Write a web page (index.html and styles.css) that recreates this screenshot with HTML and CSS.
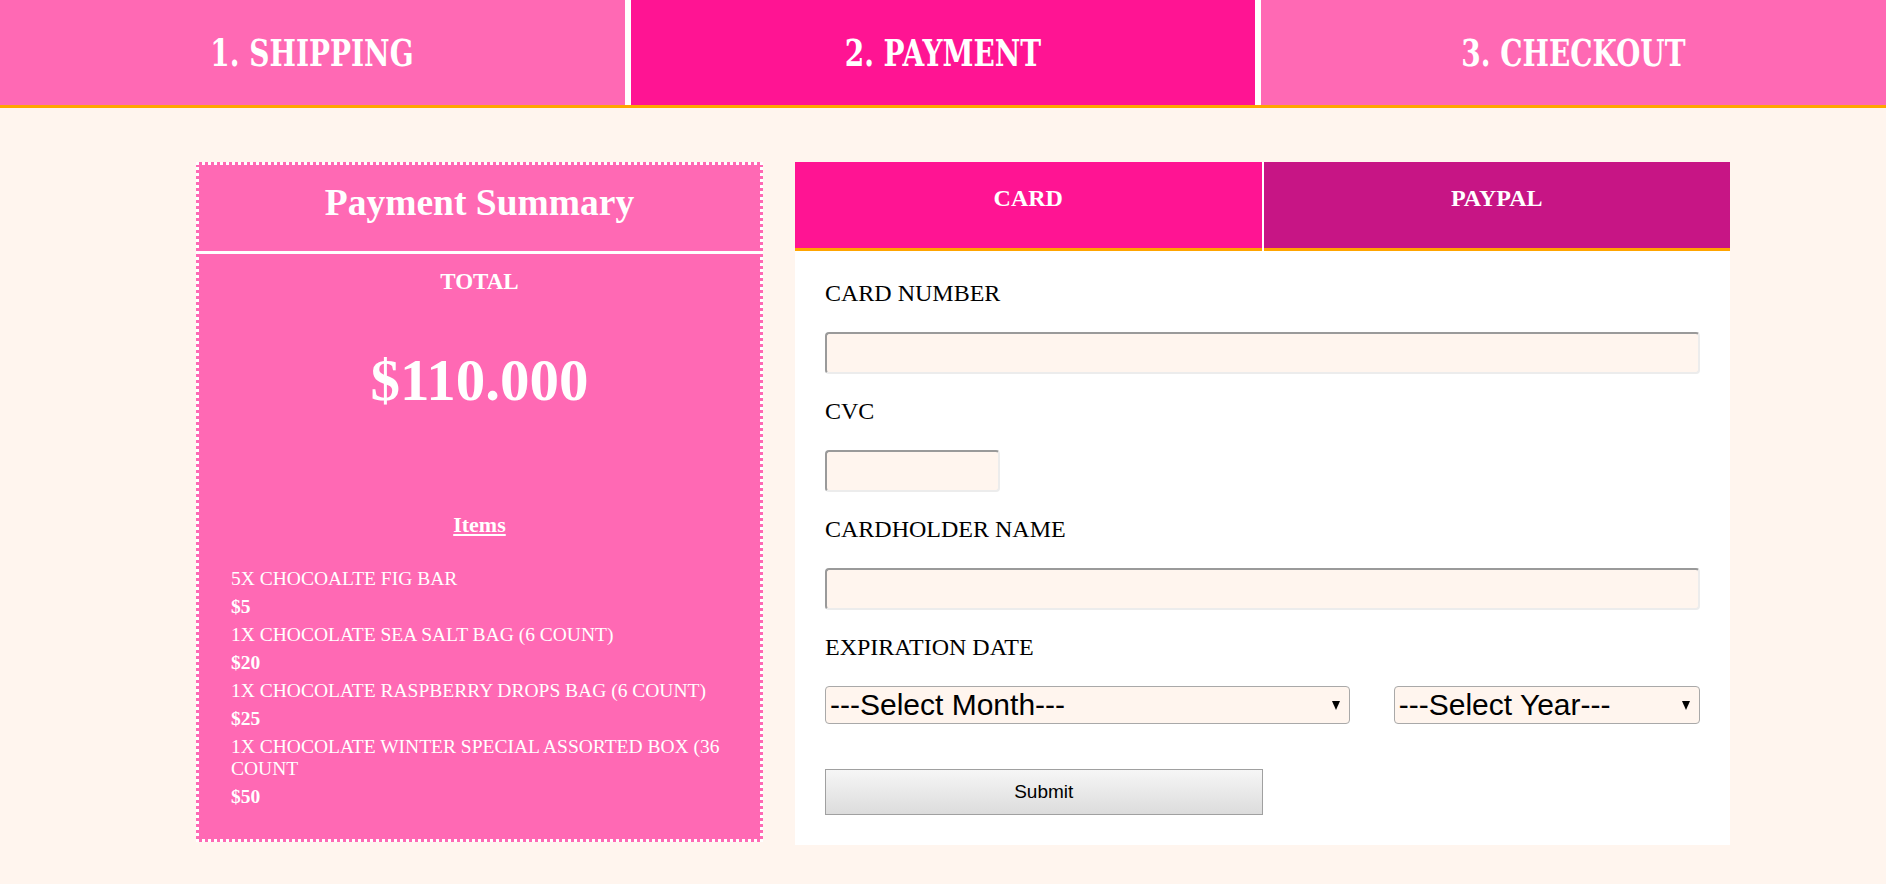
FILE: index.html
```html
<!DOCTYPE html>
<html lang="en">
<head>
<meta charset="utf-8">
<title>Payment</title>
<link rel="stylesheet" href="styles.css">
</head>
<body>
<nav class="steps">
  <div class="step"><span class="step-label">1. SHIPPING</span></div>
  <div class="step step-active"><span class="step-label">2. PAYMENT</span></div>
  <div class="step"><span class="step-label">3. CHECKOUT</span></div>
</nav>
<main class="layout">
  <section class="summary">
    <h1 class="summary-title">Payment Summary</h1>
    <div class="summary-body">
      <h3 class="total-label">TOTAL</h3>
      <div class="total-amount">$110.000</div>
      <h4 class="items-title">Items</h4>
      <div class="items">
        <p class="item-name">5X CHOCOALTE FIG BAR</p>
        <p class="item-price">$5</p>
        <p class="item-name">1X CHOCOLATE SEA SALT BAG (6 COUNT)</p>
        <p class="item-price">$20</p>
        <p class="item-name">1X CHOCOLATE RASPBERRY DROPS BAG (6 COUNT)</p>
        <p class="item-price">$25</p>
        <p class="item-name">1X CHOCOLATE WINTER SPECIAL ASSORTED BOX (36 COUNT</p>
        <p class="item-price">$50</p>
      </div>
    </div>
  </section>
  <section class="pay">
    <div class="pay-tabs">
      <div class="pay-tab pay-tab-card">CARD</div>
      <div class="pay-tab pay-tab-paypal">PAYPAL</div>
    </div>
    <form class="pay-form">
      <label class="field-label">CARD NUMBER</label>
      <input class="field field-wide" type="text">
      <label class="field-label">CVC</label>
      <input class="field field-short" type="text">
      <label class="field-label">CARDHOLDER NAME</label>
      <input class="field field-wide" type="text">
      <label class="field-label">EXPIRATION DATE</label>
      <div class="date-row">
        <span class="select-wrap select-month">
          <select class="select"><option>---Select Month---</option></select>
        </span>
        <span class="select-wrap select-year">
          <select class="select"><option>---Select Year---</option></select>
        </span>
      </div>
      <button class="submit" type="button">Submit</button>
    </form>
  </section>
</main>
</body>
</html>
```
FILE: styles.css
```css
html, body {
  margin: 0;
  padding: 0;
}

body {
  background: #fff5ee;
  font-family: "Liberation Serif", "Times New Roman", serif;
  min-height: 884px;
}

.steps {
  display: flex;
  gap: 6px;
  height: 105px;
  background: #ffffff;
  border-bottom: 3px solid #ffa500;
}

.step {
  flex: 1;
  display: flex;
  align-items: center;
  justify-content: center;
  background: #ff69b4;
}

.step-active {
  background: #ff1493;
}

.step-label {
  display: inline-block;
  color: #ffffff;
  font-family: "DejaVu Serif Condensed", "DejaVu Serif", serif;
  font-weight: bold;
  font-size: 37px;
  line-height: 40px;
  transform: scaleX(0.84);
  white-space: nowrap;
}

.layout {
  display: flex;
  align-items: flex-start;
  gap: 32px;
  padding: 54px 156px 0 196px;
}

.summary {
  width: 567px;
  flex: none;
  box-sizing: border-box;
  background: #ff69b4;
  border: 3px dotted #ffffff;
  color: #ffffff;
}

.summary-title {
  margin: 0;
  box-sizing: border-box;
  height: 89px;
  padding-top: 17px;
  border-bottom: 3px solid #ffffff;
  font-size: 37.5px;
  line-height: 42px;
  font-weight: bold;
  text-align: center;
}

.summary-body {
  padding: 15px 32px 25px 32px;
}

.total-label {
  margin: 0;
  font-size: 23px;
  line-height: 26px;
  font-weight: bold;
  text-align: center;
}

.total-amount {
  margin-top: 53px;
  font-size: 59px;
  line-height: 64px;
  font-weight: bold;
  text-align: center;
}

.items-title {
  margin: 100px 0 0;
  font-size: 22px;
  line-height: 25px;
  font-weight: bold;
  text-align: center;
  text-decoration: underline;
}

.items {
  margin-top: 31px;
}

.item-name,
.item-price {
  margin: 0 0 6px;
  font-size: 19.5px;
  line-height: 22px;
}

.item-price {
  font-weight: bold;
}

.pay {
  flex: 1;
  min-width: 0;
}

.pay-tabs {
  display: flex;
  gap: 2px;
  background: #ffffff;
}

.pay-tab {
  flex: 1;
  box-sizing: border-box;
  height: 89px;
  padding-top: 23px;
  border-bottom: 3px solid #ffa500;
  color: #ffffff;
  font-size: 24px;
  line-height: 27px;
  font-weight: bold;
  text-align: center;
}

.pay-tab-card {
  background: #ff1493;
}

.pay-tab-paypal {
  background: #c71585;
}

.pay-form {
  display: flex;
  flex-direction: column;
  align-items: flex-start;
  background: #ffffff;
  padding: 29px 30px 30px;
}

.field-label {
  display: block;
  margin-bottom: 25px;
  font-size: 24px;
  line-height: 27px;
  color: #000000;
}

.field {
  box-sizing: border-box;
  height: 42px;
  margin: 0 0 24px;
  padding: 0 8px;
  background: #fff5ee;
  border: 2px solid;
  border-color: #9a9a9a #ececec #ececec #9a9a9a;
  border-radius: 4px;
  font-size: 20px;
}

.field-wide {
  width: 100%;
}

.field-short {
  width: 20%;
}

.date-row {
  display: flex;
  justify-content: space-between;
  width: 100%;
}

.select-wrap {
  position: relative;
  display: block;
}

.select-month {
  width: 60%;
}

.select-year {
  width: 35%;
}

.select-wrap::after {
  content: "";
  position: absolute;
  right: 10px;
  top: 15px;
  border-left: 4px solid transparent;
  border-right: 4px solid transparent;
  border-top: 9px solid #000000;
  pointer-events: none;
}

.select {
  -webkit-appearance: none;
  appearance: none;
  display: block;
  box-sizing: border-box;
  width: 100%;
  height: 38px;
  margin: 0;
  padding: 0 4px;
  background: #fff5ee;
  border: 1px solid #a9a9a9;
  border-radius: 4px;
  color: #000000;
  font-family: "Liberation Sans", Arial, sans-serif;
  font-size: 30px;
  line-height: 34px;
}

.submit {
  box-sizing: border-box;
  width: 50%;
  height: 46px;
  margin-top: 45px;
  padding: 0;
  background: linear-gradient(#f6f6f6, #dcdcdc);
  border: 1px solid #a0a0a0;
  border-radius: 0;
  color: #000000;
  font-family: "Liberation Sans", Arial, sans-serif;
  font-size: 19px;
}
```
